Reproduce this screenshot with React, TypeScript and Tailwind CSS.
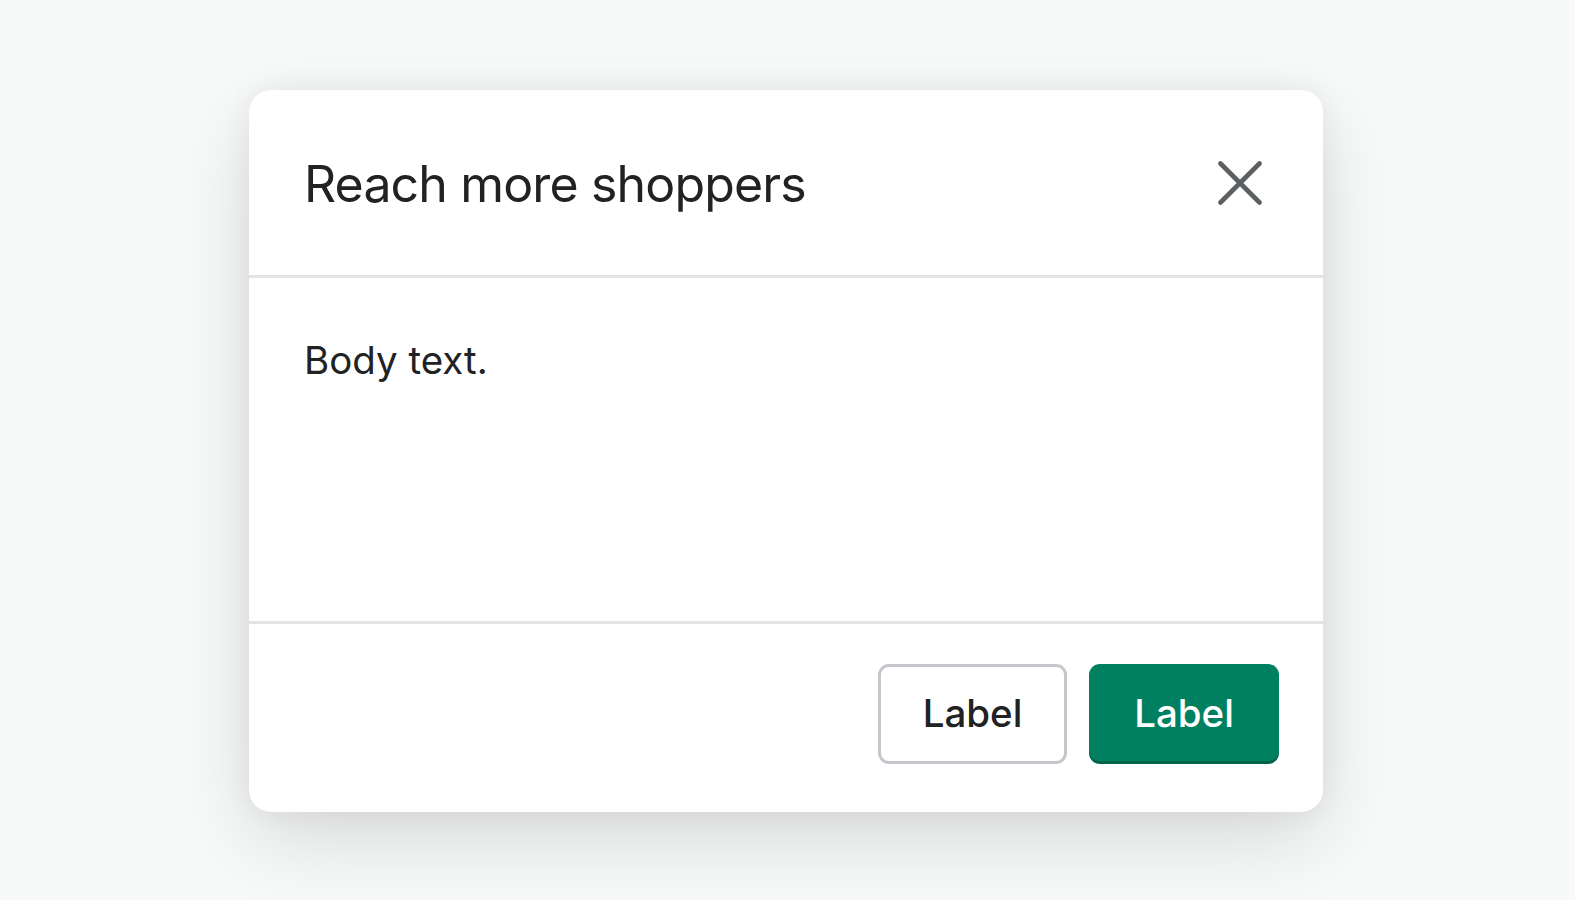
import React from "react";

function CloseIcon() {
  return (
    <svg width="44" height="44" viewBox="0 0 44 44" fill="none" aria-hidden="true">
      <path
        d="M2.5 2.5L41.5 41.5M41.5 2.5L2.5 41.5"
        stroke="#5c5f62"
        strokeWidth="4.6"
        strokeLinecap="round"
      />
    </svg>
  );
}

export default function App() {
  return (
    <div
      className="min-h-[900px] w-full bg-[#f8f9f9] pl-[249px] pt-[90px]"
      style={{ fontFamily: "Inter, 'Noto Sans', 'Liberation Sans', sans-serif" }}
    >
      <div className="flex w-[1074px] flex-col rounded-[22px] bg-white shadow-[0_28px_80px_rgba(0,0,0,0.13),0_0_28px_rgba(0,0,0,0.06)]">
        <div className="flex h-[188px] items-center justify-between border-b-[3px] border-[#e1e3e5] pl-[55px] pr-[61px]">
          <h2 className="pt-[2px] text-[50px] leading-none font-normal tracking-[-0.017em] text-[#202223]">
            Reach more shoppers
          </h2>
          <button type="button" className="flex h-[44px] w-[44px] items-center justify-center">
            <CloseIcon />
          </button>
        </div>

        <div className="h-[346px] border-b-[3px] border-[#e1e3e5] px-[55px] pt-[55px]">
          <p className="text-[38.5px] leading-[55px] text-[#202223]">Body text.</p>
        </div>

        <div className="flex items-start justify-end gap-[22px] pb-[48px] pr-[44px] pt-[40px]">
          <button
            type="button"
            className="flex h-[100px] w-[189px] items-center justify-center rounded-[11px] border-[3px] border-[#c4c7cb] bg-white text-[38.5px] font-medium text-[#202223]"
          >
            Label
          </button>
          <button
            type="button"
            className="flex h-[100px] w-[190px] items-center justify-center rounded-[11px] bg-[#008060] text-[38.5px] font-medium text-white shadow-[inset_0_-3px_0_rgba(0,0,0,0.22)]"
          >
            Label
          </button>
        </div>
      </div>
    </div>
  );
}
